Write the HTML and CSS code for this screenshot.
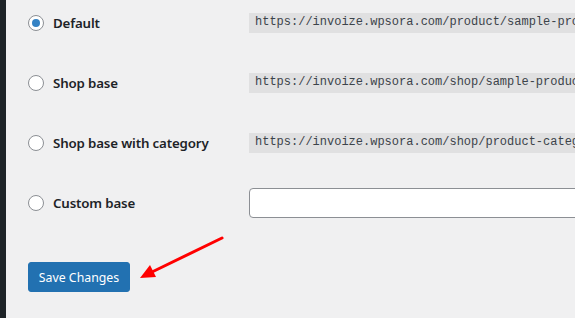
FILE: index.html
```html
<!DOCTYPE html>
<html lang="en">
<head>
    <meta charset="UTF-8">
    <meta name="viewport" content="width=device-width, initial-scale=1.0">
    <title>Permalinks</title>
    <link rel="stylesheet" href="styles.css">
</head>
<body>
    <div class="admin-menu"></div>

    <div class="content">
        <div class="options">
            <div class="option-row">
                <label class="option-label">
                    <span class="radio checked"></span>
                    Default
                </label>
                <div class="permalink-wrap">
                    <code class="permalink">https://invoize.wpsora.com/product/sample-product/</code>
                </div>
            </div>
            <div class="option-row">
                <label class="option-label">
                    <span class="radio"></span>
                    Shop base
                </label>
                <div class="permalink-wrap">
                    <code class="permalink">https://invoize.wpsora.com/shop/sample-product/</code>
                </div>
            </div>
            <div class="option-row">
                <label class="option-label">
                    <span class="radio"></span>
                    Shop base with category
                </label>
                <div class="permalink-wrap">
                    <code class="permalink">https://invoize.wpsora.com/shop/product-category/sample-product/</code>
                </div>
            </div>
            <div class="option-row">
                <label class="option-label">
                    <span class="radio"></span>
                    Custom base
                </label>
                <input type="text" class="custom-input">
            </div>
        </div>

        <div class="submit">
            <button class="button-primary">Save Changes</button>
        </div>
    </div>

    <svg class="arrow" width="90" height="50" viewBox="0 0 90 50">
        <line x1="82" y1="5" x2="12" y2="39" stroke="#ff0000" stroke-width="3" stroke-linecap="round"/>
        <polygon points="0,45 10,32 16,44" fill="#ff0000"/>
    </svg>
</body>
</html>
```

FILE: styles.css
```css
body {
    margin: 0;
    height: 100vh;
    display: flex;
    background-color: #f0f0f1;
    color: #1d2327;
    font-family: "Noto Sans", "Open Sans", sans-serif;
    overflow: hidden;
}

.admin-menu {
    width: 6px;
    flex-shrink: 0;
    background-color: #1d2327;
}

.content {
    flex: 1;
    padding: 8px 0 0 22px;
    min-width: 0;
}

.options {
    display: flex;
    flex-direction: column;
    gap: 30px;
}

.option-row {
    display: flex;
    align-items: center;
    height: 30px;
}

.option-label {
    display: flex;
    align-items: center;
    width: 221px;
    flex-shrink: 0;
    font-size: 13.3px;
    font-weight: 600;
    letter-spacing: -0.15px;
}

.radio {
    box-sizing: border-box;
    width: 16px;
    height: 16px;
    margin-right: 9px;
    border: 1px solid #8c8f94;
    border-radius: 50%;
    background-color: #fff;
    display: flex;
    align-items: center;
    justify-content: center;
}

.radio.checked::after {
    content: "";
    width: 8px;
    height: 8px;
    border-radius: 50%;
    background-color: #3582c4;
}

.permalink-wrap {
    flex: 1;
    min-width: 0;
    display: flex;
    overflow: hidden;
}

.permalink {
    display: block;
    white-space: nowrap;
    padding: 2px 5px 3px 6px;
    background-color: #e0e0e1;
    color: #3c434a;
    font-family: "Liberation Mono", monospace;
    font-size: 12px;
    line-height: 15px;
}

.custom-input {
    box-sizing: border-box;
    flex: 1;
    height: 30px;
    margin: 0 -20px 0 0;
    border: 1px solid #8c8f94;
    border-radius: 4px;
    background-color: #fff;
}

.submit {
    margin-top: 44px;
}

.button-primary {
    box-sizing: border-box;
    height: 30px;
    width: 102px;
    padding: 0;
    border: 1px solid #2271b1;
    border-radius: 3px;
    background-color: #2271b1;
    color: #fff;
    font-family: "Noto Sans", "Open Sans", sans-serif;
    font-size: 12.3px;
    cursor: pointer;
}

.arrow {
    position: absolute;
    left: 140px;
    top: 233px;
}
```
